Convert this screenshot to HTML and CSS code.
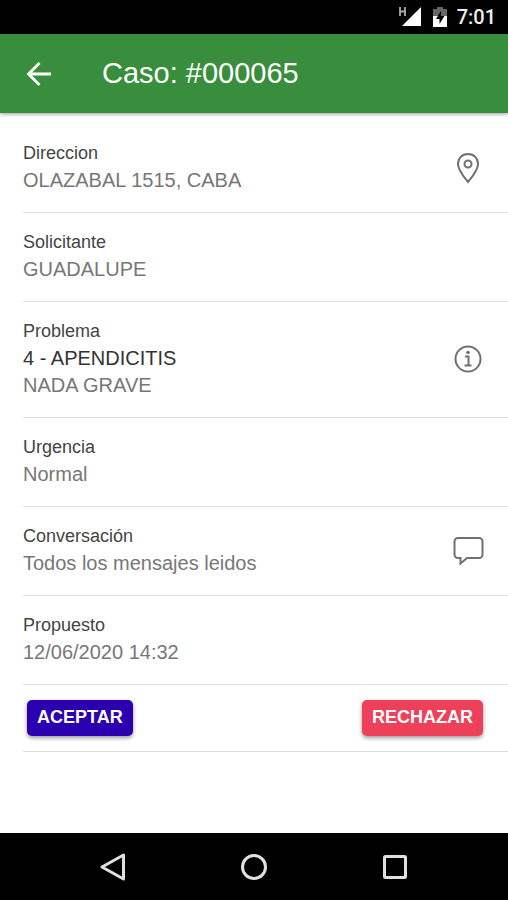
FILE: index.html
```html
<!DOCTYPE html>
<html lang="es">
<head>
    <meta charset="utf-8">
    <meta name="viewport" content="width=device-width, initial-scale=1">
    <title>Caso: #000065</title>
    <link rel="stylesheet" href="styles.css">
</head>
<body>
    <div class="status-bar">
        <svg width="24" height="22" viewBox="0 0 24 22">
            <path d="M2 1v9M7 1v9M2 5.500H7" fill="none" stroke="#aaa" stroke-width="1.800"/>
            <path d="M23 1v19H4z" fill="#fff"/>
        </svg>
        <svg class="battery" width="14" height="22" viewBox="0 0 14 22">
            <path d="M4 1h6v2h4v8H0V3h4z" fill="#666"/>
            <path d="M0 10h14v11H0z" fill="#fff"/>
            <path d="M8 5l-5 8h3.500v5l5-8H8z" fill="#000"/>
        </svg>
        <span class="time">7:01</span>
    </div>

    <header class="toolbar">
        <button type="button" class="back-button" aria-label="Volver">
            <svg width="26" height="26" viewBox="0 0 26 26">
                <path d="M25 13H3M13.500 2L2.500 13l11 11" fill="none" stroke="#fff" stroke-width="2.800"/>
            </svg>
        </button>
        <h1>Caso: #000065</h1>
    </header>

    <main class="list">
        <section class="item">
            <div>
                <h2>Direccion</h2>
                <p>OLAZABAL 1515, CABA</p>
            </div>
            <svg width="32" height="32" viewBox="0 0 32 32">
                <path d="M16 2C10 2 6 6.400 6 12c0 6.500 6.500 13.500 10 18 3.500-4.500 10-11.500 10-18 0-5.600-4-10-10-10z"/>
                <circle cx="16" cy="12" r="3.500"/>
            </svg>
        </section>
        <section class="item">
            <div>
                <h2>Solicitante</h2>
                <p>GUADALUPE</p>
            </div>
        </section>
        <section class="item">
            <div>
                <h2>Problema</h2>
                <p class="dark">4 - APENDICITIS</p>
                <p>NADA GRAVE</p>
            </div>
            <svg width="32" height="32" viewBox="0 0 32 32">
                <circle cx="16" cy="16" r="12.500"/>
                <path d="M13 13.500h3.500V22M12.500 22.500h7"/>
                <circle class="dot" cx="16" cy="9.500" r="1.800"/>
            </svg>
        </section>
        <section class="item">
            <div>
                <h2>Urgencia</h2>
                <p>Normal</p>
            </div>
        </section>
        <section class="item">
            <div>
                <h2>Conversación</h2>
                <p>Todos los mensajes leidos</p>
            </div>
            <svg width="32" height="32" viewBox="0 0 32 32">
                <path d="M6 3h21a3.500 3.500 0 0 1 3.500 3.500v13A3.500 3.500 0 0 1 27 23H15l-6.500 5.500V23H6a3.500 3.500 0 0 1-3.500-3.500v-13A3.500 3.500 0 0 1 6 3z"/>
            </svg>
        </section>
        <section class="item">
            <div>
                <h2>Propuesto</h2>
                <p>12/06/2020 14:32</p>
            </div>
        </section>
        <div class="item buttons">
            <button type="button" class="button accept">ACEPTAR</button>
            <button type="button" class="button reject">RECHAZAR</button>
        </div>
    </main>

    <nav class="nav-bar">
        <button type="button" aria-label="Atrás">
            <svg width="28" height="28" viewBox="0 0 28 28">
                <path d="M24.500 2v24L3 14z"/>
            </svg>
        </button>
        <button type="button" aria-label="Inicio">
            <svg width="28" height="28" viewBox="0 0 28 28">
                <circle cx="14" cy="14" r="11.500"/>
            </svg>
        </button>
        <button type="button" aria-label="Recientes">
            <svg width="28" height="28" viewBox="0 0 28 28">
                <rect x="3.500" y="3.500" width="21" height="21" rx="1"/>
            </svg>
        </button>
    </nav>
</body>
</html>
```

FILE: styles.css
```css
* {
    box-sizing: border-box;
}
body {
    display: flex;
    flex-direction: column;
    min-height: 100vh;
    margin: 0;
    background-color: #fff;
    font-family: "Liberation Sans", Arial, sans-serif;
}
h1, h2, p {
    margin: 0;
    font-weight: normal;
}
button {
    border: none;
    cursor: pointer;
    font-family: inherit;
}
svg {
    display: block;
    flex: none;
}

.status-bar {
    display: flex;
    align-items: center;
    justify-content: flex-end;
    height: 34px;
    padding-right: 12px;
    background-color: #000;
}
.battery {
    margin: 0 10px 0 11px;
}
.time {
    color: #eee;
    font-family: Roboto, sans-serif;
    font-size: 20px;
    font-weight: 500;
}

.toolbar {
    display: flex;
    align-items: center;
    gap: 40px;
    height: 79px;
    padding: 0 16px;
    background-color: #388e3c;
    box-shadow: 0 1px 4px rgba(0, 0, 0, 0.4);
}
.back-button {
    padding: 10px;
    background: none;
}
.toolbar h1 {
    color: #fff;
    font-size: 29px;
}

.list {
    flex: 1;
    padding: 11px 0 0 23px;
}
.item {
    display: flex;
    align-items: center;
    justify-content: space-between;
    padding: 17px 24px 18px 0;
    border-bottom: 1px solid #dedede;
}
.item h2 {
    margin-bottom: 2px;
    color: #444;
    font-size: 18px;
    line-height: 24px;
}
.item p {
    color: #777;
    font-size: 20px;
    line-height: 27px;
}
.item .dark {
    color: #333;
}
.item svg {
    fill: none;
    stroke: #707070;
    stroke-width: 2;
}
.item .dot {
    fill: #707070;
    stroke: none;
}

.buttons {
    padding: 15px 25px 15px 4px;
}
.button {
    height: 36px;
    padding: 0 10px 2px;
    border-radius: 5px;
    color: #fff;
    font-size: 18px;
    font-weight: bold;
    box-shadow: 0 2px 4px rgba(0, 0, 0, 0.4);
}
.accept {
    background-color: #2a00b0;
}
.reject {
    background-color: #ef4059;
}

.nav-bar {
    display: flex;
    align-items: center;
    justify-content: center;
    gap: 97px;
    height: 67px;
    background-color: #000;
}
.nav-bar button {
    padding: 8px;
    background: none;
}
.nav-bar svg {
    fill: none;
    stroke: #e0e0e0;
    stroke-width: 3;
    stroke-linejoin: round;
}
```
